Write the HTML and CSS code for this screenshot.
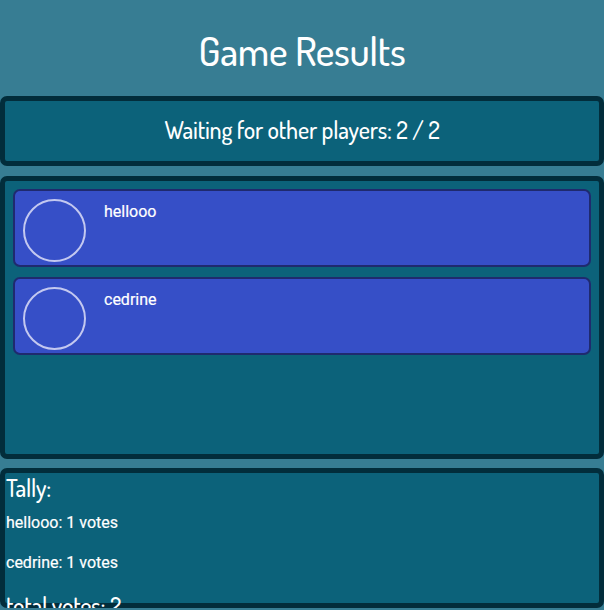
FILE: index.html
```html
<!DOCTYPE html>
<html>
<head>
<meta charset="utf-8">
<link rel="stylesheet" href="styles.css">
</head>
<body>
<div class="page">
  <h1 class="title">Game Results</h1>
  <section class="panel status">
    <h2 class="status-text">Waiting for other players: 2 / 2</h2>
  </section>
  <section class="panel players">
    <div class="card">
      <div class="avatar"></div>
      <div class="name">hellooo</div>
    </div>
    <div class="card">
      <div class="avatar"></div>
      <div class="name">cedrine</div>
    </div>
  </section>
  <section class="panel tally">
    <h3 class="tally-head">Tally:</h3>
    <p class="tally-row">hellooo: 1 votes</p>
    <p class="tally-row">cedrine: 1 votes</p>
    <h3 class="tally-head total">total votes: 2</h3>
  </section>
</div>
</body>
</html>
```
FILE: styles.css
```css
html, body {
  margin: 0;
  padding: 0;
  background: #377d93;
  overflow: hidden;
}
.page {
  display: flex;
  flex-direction: column;
  gap: 10px;
  font-family: "Dosis", "DejaVu Sans Condensed", "DejaVu Sans", sans-serif;
  color: #ffffff;
}
.title {
  margin: 0;
  height: 86px;
  padding-top: 25px;
  box-sizing: border-box;
  text-align: center;
  font-weight: 500;
  font-size: 40px;
  line-height: 50px;
  letter-spacing: -0.3px;
}
.panel {
  background: #0c627a;
  border: 5px solid #022d3b;
  border-radius: 7px;
  box-sizing: border-box;
}
.status {
  height: 70px;
  display: flex;
  align-items: center;
  justify-content: center;
}
.status-text {
  margin: 0 0 4px;
  font-weight: 500;
  font-size: 24px;
  letter-spacing: -0.2px;
}
.players {
  height: 283px;
  padding: 8px 8px;
  display: flex;
  flex-direction: column;
  gap: 10px;
}
.card {
  height: 78px;
  box-sizing: border-box;
  background: #364fc7;
  border: 2px solid #1f2a6e;
  border-radius: 7px;
  display: flex;
  align-items: flex-start;
  padding: 8px 8px;
  gap: 17px;
}
.avatar {
  width: 63px;
  height: 63px;
  box-sizing: border-box;
  border: 2px solid #c3c8f0;
  border-radius: 50%;
  flex: none;
}
.name {
  font-family: Roboto, "Liberation Sans", sans-serif;
  font-size: 16px;
  font-weight: 400;
  line-height: 18px;
  margin-top: 4px;
  margin-left: 1px;
  -webkit-text-stroke: 0.2px #ffffff;
}
.tally {
  height: 140px;
  margin-top: -1px;
  padding: 0 0 0 1px;
}
.tally-head {
  margin: 1px 0 0;
  font-weight: 500;
  font-size: 24px;
  line-height: 28px;
  letter-spacing: -0.2px;
}
.total {
  margin-top: -2px;
}
.tally-row {
  font-family: Roboto, "Liberation Sans", sans-serif;
  font-size: 16px;
  font-weight: 400;
  line-height: 18px;
  margin: 12px 0 22px;
  -webkit-text-stroke: 0.2px #ffffff;
}
.tally-row + .tally-row {
  margin-top: 0;
}
```
